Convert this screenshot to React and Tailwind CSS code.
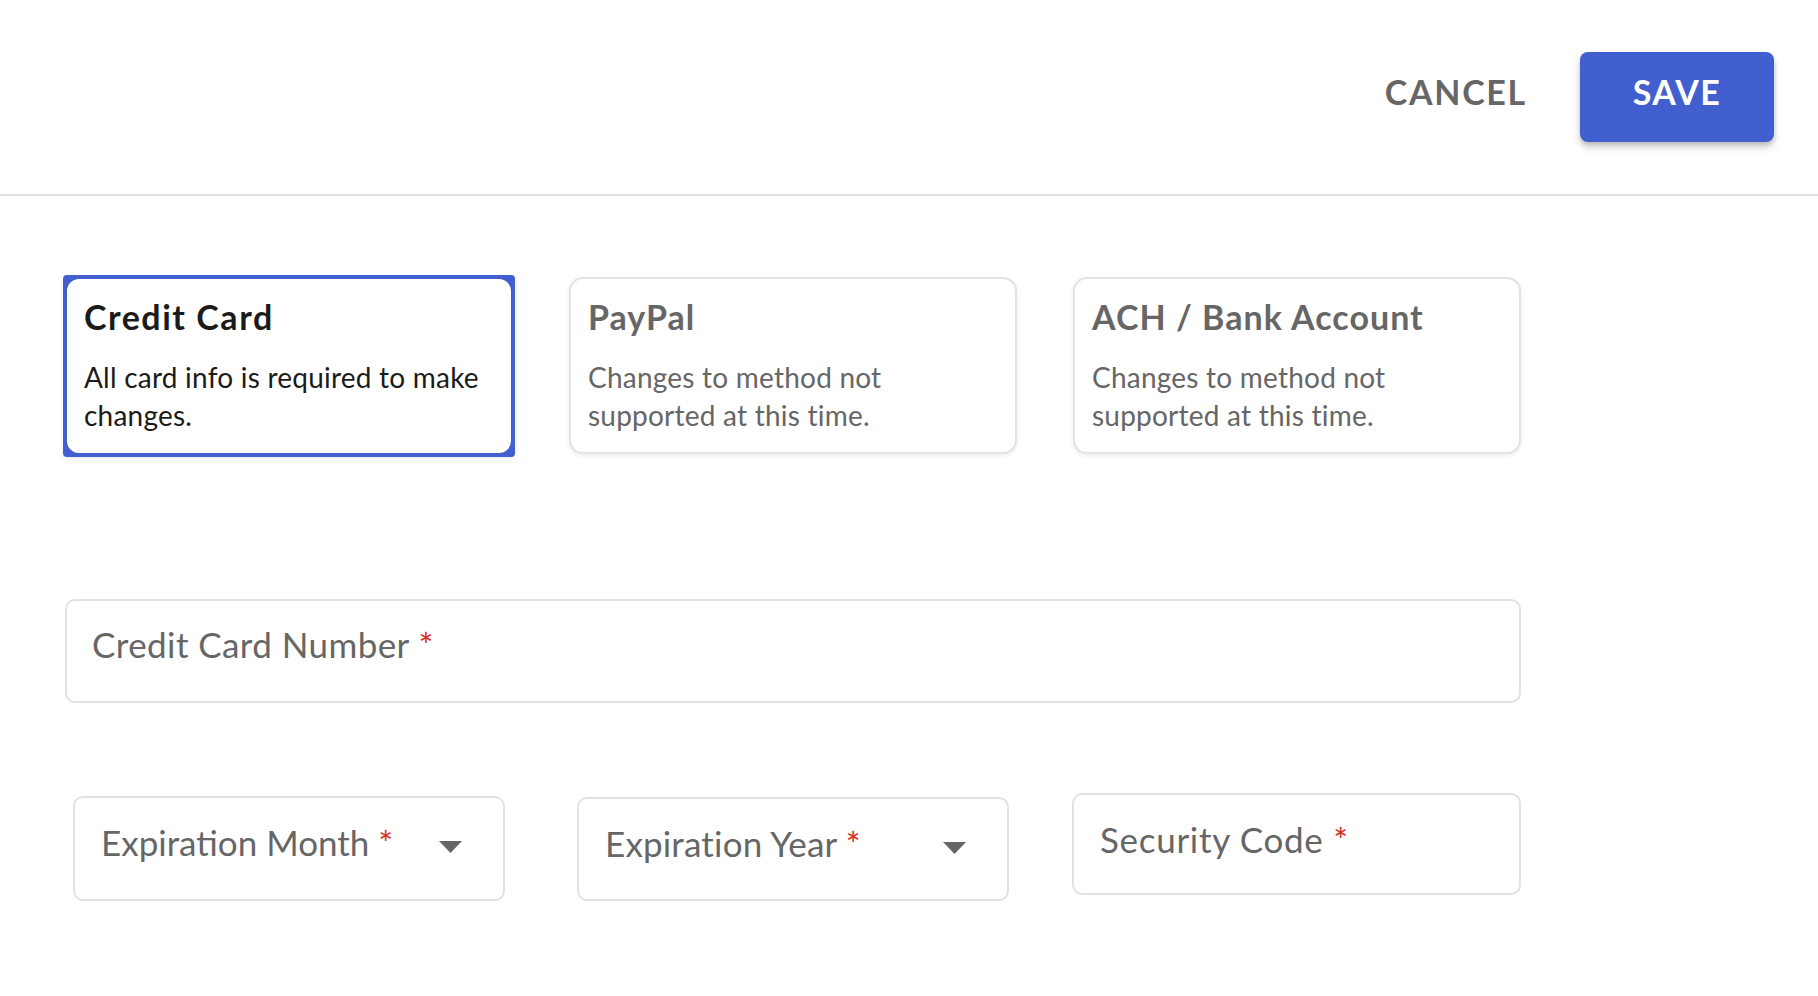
export default function App() {
  const Arrow = () => (
    <svg width="23" height="12" viewBox="0 0 23 12" className="absolute right-[41px] top-[43px]">
      <path d="M0 0 L23 0 L11.5 12 Z" fill="#666666" />
    </svg>
  );
  const Req = () => <span className="text-[#d93025]"> *</span>;
  return (
    <div className="min-h-screen w-full bg-white font-['Lato',sans-serif]">
      <header className="flex h-[196px] items-start justify-end border-b-2 border-[#e2e2e2] pr-[44px] pt-[52px]">
        <button className="mr-[53px] flex h-[90px] items-center pb-[11px] text-[34px] font-bold tracking-[0.05em] text-[#666666]">
          CANCEL
        </button>
        <button className="flex h-[90px] w-[194px] items-center justify-center rounded-[8px] bg-[#425fcf] pb-[11px] text-[34px] font-bold tracking-[0.04em] text-white shadow-[0_3px_5px_rgba(0,0,0,0.18),0_6px_10px_rgba(0,0,0,0.12)]">
          SAVE
        </button>
      </header>

      <main className="w-[1521px] pl-[65px]">
        <div className="mt-[81px] flex h-[177px] items-start">
          <div className="-ml-[2px] -mt-[2px] h-[182px] w-[452px] shrink-0 rounded-[4px] bg-[#425fcf] p-[4px] shadow-[0_2px_4px_rgba(0,0,0,0.08)]">
            <div className="h-full rounded-[12px] bg-white px-[17px] pt-[17px]">
              <div className="whitespace-nowrap text-[34px] font-bold leading-[41px] tracking-[0.045em] text-[#1b1b1b]">Credit Card</div>
              <div className="mt-[21px] whitespace-nowrap text-[28px] leading-[38px] tracking-[0.008em] text-[#1b1b1b]">
                All card info is required to make
                <br />
                changes.
              </div>
            </div>
          </div>
          <div className="ml-[54px] h-[177px] w-[448px] shrink-0 rounded-[14px] border-2 border-[#e3e3e3] bg-white px-[17px] pt-[17px] shadow-[0_2px_4px_rgba(0,0,0,0.08)]">
            <div className="whitespace-nowrap text-[34px] font-bold leading-[41px] tracking-[0.03em] text-[#666666]">PayPal</div>
            <div className="mt-[21px] whitespace-nowrap text-[28px] leading-[38px] tracking-[0.008em] text-[#666666]">
              Changes to method not
              <br />
              supported at this time.
            </div>
          </div>
          <div className="ml-[56px] h-[177px] w-[448px] shrink-0 rounded-[14px] border-2 border-[#e3e3e3] bg-white px-[17px] pt-[17px] shadow-[0_2px_4px_rgba(0,0,0,0.08)]">
            <div className="whitespace-nowrap text-[34px] font-bold leading-[41px] tracking-[0.03em] text-[#666666]">ACH / Bank Account</div>
            <div className="mt-[21px] whitespace-nowrap text-[28px] leading-[38px] tracking-[0.008em] text-[#666666]">
              Changes to method not
              <br />
              supported at this time.
            </div>
          </div>
        </div>

        <div className="mt-[145px] h-[104px] w-[1456px] rounded-[10px] border-2 border-[#e2e2e2] px-[25px] pt-[22px]">
          <div className="text-[35px] leading-[42px] tracking-[0.012em] text-[#666666]">
            Credit Card Number<Req />
          </div>
        </div>

        <div className="mt-[93px] flex items-start">
          <div className="relative ml-[8px] h-[105px] w-[432px] rounded-[10px] border-2 border-[#e2e2e2] px-[26px] pt-[23px]">
            <div className="text-[35px] leading-[42px] text-[#666666]">
              Expiration Month<Req />
            </div>
            <Arrow />
          </div>
          <div className="relative ml-[72px] mt-[1px] h-[104px] w-[432px] rounded-[10px] border-2 border-[#e2e2e2] px-[26px] pt-[23px]">
            <div className="text-[35px] leading-[42px] tracking-[0.005em] text-[#666666]">
              Expiration Year<Req />
            </div>
            <Arrow />
          </div>
          <div className="ml-[63px] -mt-[3px] h-[102px] w-[449px] rounded-[10px] border-2 border-[#e2e2e2] px-[26px] pt-[23px]">
            <div className="text-[35px] leading-[42px] tracking-[0.02em] text-[#666666]">
              Security Code<Req />
            </div>
          </div>
        </div>
      </main>
    </div>
  );
}
